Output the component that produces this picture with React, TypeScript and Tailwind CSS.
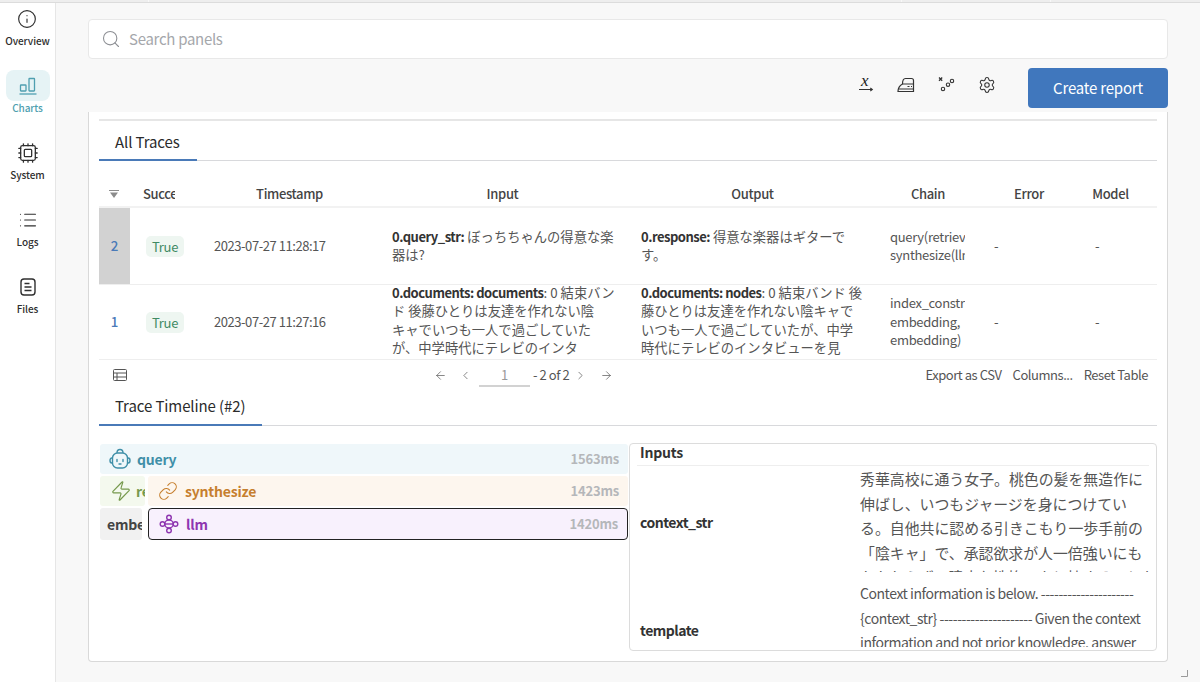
import { ArrowLeft, ArrowRight, ChevronLeft, ChevronRight, Cpu, Info, Link, List, Search, Settings, Zap } from 'lucide-react'

const font = { fontFamily: '"Noto Sans CJK JP", "Noto Sans", sans-serif' }

function ChartsIcon() {
  return (
    <svg width="20" height="20" viewBox="0 0 20 20" fill="none" stroke="currentColor" strokeWidth="1.3">
      <rect x="2.500" y="9" width="5.500" height="6" rx="0.500" />
      <rect x="11" y="2.500" width="5.500" height="12.500" rx="0.500" />
      <path d="M1.500 18h17" />
    </svg>
  )
}

function FilesIcon() {
  return (
    <svg width="18" height="20" viewBox="0 0 18 20" fill="none" stroke="currentColor" strokeWidth="1.400">
      <rect x="2" y="2" width="14" height="16" rx="3" />
      <path d="M5.500 6.500h5M5.500 10h7M5.500 13.500h7" />
    </svg>
  )
}

function VarIcon() {
  return (
    <svg width="16" height="17" viewBox="0 0 16 17" fill="none" className="overflow-visible">
      <text x="3" y="10" fontSize="17" fontStyle="italic" fill="#222" fontFamily='"Liberation Serif", serif'>x</text>
      <path d="M1 13.500h13M12.300 12l2 1.500-2 1.500" stroke="#333" strokeWidth="1.100" />
    </svg>
  )
}

function IronIcon() {
  return (
    <svg width="18" height="16" viewBox="0 0 18 16" fill="none" stroke="#333" strokeWidth="1.200">
      <path d="M1 14.500c0-3.500 1.800-6 4.500-7.500 0-3 1-5.500 3-5.500h6c1.300 0 2 .8 2 2v11z" />
      <path d="M5.500 7h11M1.500 12h15" />
      <path d="M10.500 9.500h2M14 9.500h1" />
    </svg>
  )
}

function ScatterIcon() {
  return (
    <svg width="17" height="17" viewBox="0 0 17 17" fill="none" stroke="#333" strokeWidth="1.100">
      <path d="M1 1.500l3.200 3.200M4.200 1.500L1 4.700" strokeWidth="1.300" />
      <circle cx="5" cy="13" r="1.700" />
      <circle cx="10" cy="8.700" r="1.700" />
      <circle cx="14" cy="5" r="1.700" />
    </svg>
  )
}

function BotIcon() {
  return (
    <svg width="22" height="22" viewBox="0 0 22 22" fill="none" stroke="#3f8fa8" strokeWidth="1.400">
      <rect x="3.500" y="5" width="15" height="15" rx="5" />
      <path d="M8 5c0-2 1.300-3.500 3-3.500S14 3 14 5" />
      <path d="M3.500 10H2.800C1.800 10 1 11 1 12.500S1.800 15 2.800 15h.7M18.500 10h.7c1 0 1.800 1 1.800 2.500S20.200 15 19.200 15h-.7" />
      <path d="M8 11.500v2M14 11.500v2" strokeLinecap="round" />
      <path d="M10 16h2" strokeLinecap="round" />
    </svg>
  )
}

function LlmIcon() {
  return (
    <svg width="20" height="20" viewBox="0 0 20 20" fill="none" stroke="#8e35b0" strokeWidth="1.400">
      <circle cx="10" cy="3.500" r="2.300" />
      <circle cx="10" cy="16.500" r="2.300" />
      <circle cx="3.500" cy="10" r="2.300" />
      <circle cx="16.500" cy="10" r="2.300" />
      <rect x="5.800" y="6" width="8.400" height="8" rx="4" />
      <path d="M5.800 10h8.400" />
    </svg>
  )
}

function TableIcon() {
  return (
    <svg width="14" height="12" viewBox="0 0 14 12" fill="none" stroke="#555" strokeWidth="1">
      <rect x="0.500" y="0.500" width="13" height="11" rx="1" />
      <path d="M.5 4h13M.5 8h13M4 4v7.500" />
    </svg>
  )
}

function NavItem({ label, icon, active }: { label: string; icon: React.ReactNode; active?: boolean }) {
  return (
    <div className={`flex flex-col items-center h-[67px] ${active ? 'text-[#4f9fb0]' : 'text-[#2f2f2f]'}`}>
      <div className={`w-[44px] h-[31px] rounded-[8px] flex items-center justify-center ${active ? 'bg-[#e6f3f5]' : ''}`}>
        {icon}
      </div>
      <div className="text-[10px] tracking-[-0.1px] leading-[14px] font-medium">{label}</div>
    </div>
  )
}

function TrueTag() {
  return <span className="inline-block bg-[#eef6f1] text-[#3f8a63] rounded-[5px] px-[6px] text-[13px] tracking-[-0.3px] leading-[21px]">True</span>
}

function Tab({ label, width, pad }: { label: string; width: string; pad: string }) {
  return (
    <div className="border-b border-[#d8d9dc]">
      <div className={`${width} ${pad} -mb-[1px] border-b-2 border-[#4a7ab8] pl-[16px] text-[15px] tracking-[-0.1px] text-[#2b2b2b]`}>{label}</div>
    </div>
  )
}

const gridCols = 'grid grid-cols-[31px_75px_175px_250px_250px_104px_90px_1fr]'

function Row({ id, selected, time, input, output, chain, height }: {
  id: string
  selected?: boolean
  time: string
  input: React.ReactNode
  output: React.ReactNode
  chain: React.ReactNode
  height: string
}) {
  return (
    <div className={`${gridCols} ${height} border-b border-[#eeeeee] text-[13.300px] leading-[18.500px] text-[#555]`}>
      <div className={`flex items-center justify-center font-medium text-[#4a7ab8] ${selected ? 'bg-[#d2d2d2]' : ''}`}>{id}</div>
      <div className="flex items-center pl-[16px]"><TrueTag /></div>
      <div className="flex items-center pl-[9px] whitespace-nowrap text-[13px] tracking-[-0.45px]">{time}</div>
      <div className="flex items-center pl-[12px] whitespace-nowrap overflow-hidden">{input}</div>
      <div className="flex items-center pl-[11px] whitespace-nowrap overflow-hidden">{output}</div>
      <div className="flex items-center pl-[10px] pr-[19px] whitespace-nowrap text-[13px] tracking-[-0.3px]"><div className="overflow-hidden">{chain}</div></div>
      <div className="flex items-center pl-[10px]">-</div>
      <div className="flex items-center pl-[21px]">-</div>
    </div>
  )
}

export default function App() {
  const boldCell = 'font-bold text-[#333] text-[13px] tracking-[-0.5px]'
  return (
    <div style={font} className="w-[1200px] h-[682px] overflow-hidden bg-[#f8f8f8] flex flex-col">
      <div className="h-[3px] bg-[#eeeeee] border-b border-[#dcdcdc] shrink-0 flex">
        <div className="w-[149px] border-r border-[#f8f8f8]" />
        <div className="w-[753px] border-r border-[#f8f8f8]" />
        <div className="w-[149px] border-r border-[#f8f8f8]" />
      </div>
      <div className="flex flex-1 min-h-0">
        <div className="w-[56px] shrink-0 bg-white border-r border-[#e6e6e6] flex flex-col items-center">
          <NavItem label="Overview" icon={<Info size={20} strokeWidth={1.4} />} />
          <NavItem label="Charts" active icon={<ChartsIcon />} />
          <NavItem label="System" icon={<Cpu size={22} strokeWidth={1.4} />} />
          <NavItem label="Logs" icon={<List size={20} strokeWidth={1.3} />} />
          <NavItem label="Files" icon={<FilesIcon />} />
        </div>

        <div className="flex-1 min-w-0 pl-[32px] pr-[32px] pt-[16px] flex flex-col relative">
          <div className="h-[40px] bg-white border border-[#e8e8e8] rounded-[4px] flex items-center pl-[12px] gap-[8px] text-[15px] tracking-[-0.3px] text-[#a5a7ab] shrink-0">
            <Search size={20} strokeWidth={1.3} className="text-[#8d8f94]" />
            <span className="pt-[1px]">Search panels</span>
          </div>

          <div className="flex items-center justify-end h-[40px] mt-[9px] shrink-0">
            <div className="flex items-center gap-[23px] mr-[32px] -mt-[7px]">
              <VarIcon />
              <IronIcon />
              <ScatterIcon />
              <Settings size={18} strokeWidth={1.4} className="text-[#333]" />
            </div>
            <div className="w-[140px] h-[40px] pt-[1px] rounded-[4px] bg-[#4077bd] text-white text-[15px] tracking-[-0.2px] flex items-center justify-center">Create report</div>
          </div>

          <div className="h-[550px] mt-[4px] bg-white border border-t-0 border-[#d9d9d9] rounded-b-[4px] px-[10px] pt-[7px] shrink-0">
            <div className="border-t-2 border-[#e6e6e6]" />
            <Tab label="All Traces" width="w-[98px]" pad="h-[40px] leading-[42px]" />

            <div className={`${gridCols} h-[47px] border-b-2 border-[#f2f2f2] text-[13px] tracking-[-0.35px] font-medium text-[#444] items-end pb-[3px]`}>
              <div className="flex justify-center pb-[5px] pr-[2px]">
                <svg width="10" height="8" viewBox="0 0 10 8" fill="#8c8c8c">
                  <path d="M0 0h10v1H0zM1 2.500h8L5 8z" />
                </svg>
              </div>
              <div className="pl-[13px] w-[45px] overflow-hidden">Success</div>
              <div className="text-center -ml-[6px]">Timestamp</div>
              <div className="text-center -ml-[5px]">Input</div>
              <div className="text-center -ml-[5px]">Output</div>
              <div className="text-center -ml-[8px]">Chain</div>
              <div className="text-center">Error</div>
              <div className="text-center -mr-[4px] -ml-[14px]">Model</div>
            </div>

            <Row
              id="2"
              selected
              height="h-[77px]"
              time="2023-07-27 11:28:17"
              input={<div><b className={boldCell}>0.query_str:</b> ぼっちちゃんの得意な楽<br />器は?</div>}
              output={<div><b className={boldCell}>0.response:</b> 得意な楽器はギターで<br />す。</div>}
              chain={<>query(retrieve,<br />synthesize(llm</>}
            />
            <Row
              id="1"
              height="h-[75px]"
              time="2023-07-27 11:27:16"
              input={<div className="-mt-[3px]"><b className={boldCell}>0.documents: documents</b>: 0 結束バン<br />ド 後藤ひとりは友達を作れない陰<br />キャでいつも一人で過ごしていた<br />が、中学時代にテレビのインタ</div>}
              output={<div className="-mt-[3px]"><b className={boldCell}>0.documents: nodes</b>: 0 結束バンド 後<br />藤ひとりは友達を作れない陰キャで<br />いつも一人で過ごしていたが、中学<br />時代にテレビのインタビューを見</div>}
              chain={<>index_constru<br />embedding,<br />embedding)</>}
            />

            <div className="h-[26px] pt-[4px] flex items-center text-[13px] tracking-[-0.45px] text-[#555]">
              <div className="w-[335px] shrink-0 pl-[14px]">
                <TableIcon />
              </div>
              <ArrowLeft size={13} strokeWidth={1.3} />
              <ChevronLeft size={13} strokeWidth={1.3} className="ml-[12px]" />
              <div className="w-[51px] ml-[7px] mr-[3px] text-center border-b-2 border-[#d2d2d2] text-[#999] h-[24px] leading-[24px]">1</div>
              <span>- 2 of 2</span>
              <ChevronRight size={13} strokeWidth={1.3} className="ml-[5px]" />
              <ArrowRight size={13} strokeWidth={1.3} className="ml-[13px]" />
              <div className="ml-auto flex gap-[11px] pr-[9px]">
                <span>Export as CSV</span>
                <span>Columns...</span>
                <span>Reset Table</span>
              </div>
            </div>

            <Tab label="Trace Timeline (#2)" width="w-[163px]" pad="h-[40px] leading-[40px]" />

            <div className="flex gap-[1px] mt-[18px]">
              <div className="w-[529px] shrink-0 pl-[1px] flex flex-col gap-[2px] text-[14px] leading-[18px] font-bold tracking-[-0.2px]">
                <div className="h-[30px] rounded-[3px] bg-[#eff7fa] flex items-center pl-[9px] pr-[9px] text-[#3f8fa8]">
                  <BotIcon />
                  <span className="ml-[6px] -mt-[1px]">query</span>
                  <span className="ml-auto text-[#b5b7ba] text-[13px] font-semibold">1563ms</span>
                </div>
                <div className="h-[30px] flex gap-[3px]">
                  <div className="w-[45px] rounded-[3px] bg-[#f4f9ee] flex items-center pl-[10px] text-[#76994d] overflow-hidden">
                    <Zap size={22} strokeWidth={1.3} className="shrink-0" />
                    <span className="ml-[4px]">re</span>
                  </div>
                  <div className="flex-1 rounded-[3px] bg-[#fdf6ee] flex items-center pl-[10px] pr-[9px] text-[#c67f2e]">
                    <Link size={20} strokeWidth={1.3} />
                    <span className="ml-[7px] -mt-[1px]">synthesize</span>
                    <span className="ml-auto text-[#b5b7ba] text-[13px] font-semibold">1423ms</span>
                  </div>
                </div>
                <div className="h-[32px] flex gap-[6px]">
                  <div className="w-[42px] rounded-[3px] bg-[#f1f1f1] flex items-center pl-[7px] text-[#444] overflow-hidden">embe</div>
                  <div className="flex-1 rounded-[4px] bg-[#f8f1fd] border border-[#222] flex items-center pl-[10px] pr-[9px] text-[#8e35b0]">
                    <LlmIcon />
                    <span className="ml-[7px]">llm</span>
                    <span className="ml-auto text-[#b5b7ba] text-[13px] font-semibold">1420ms</span>
                  </div>
                </div>
              </div>

              <div className="w-[528px] h-[208px] -mt-[1px] border border-[#dcdcdc] rounded-[4px] px-[7px] py-[3px]">
                <div className="h-full overflow-hidden">
                  <div className="flex h-[19px] border-b border-[#eeeeee]">
                    <div className="text-[14px] tracking-[-0.2px] leading-[16px] font-bold text-[#333] pl-[3px] -mt-[3px]">Inputs</div>
                  </div>
                  <div className="flex h-[106px] overflow-hidden">
                    <div className="w-[223px] shrink-0 pl-[3px] flex items-center text-[14px] tracking-[-0.5px] font-bold text-[#333] pt-[6px]">context_str</div>
                    <div className="text-[14.900px] leading-[24.500px] text-[#555] whitespace-nowrap pt-[1px]">
                      秀華高校に通う女子。桃色の髪を無造作に<br />
                      伸ばし、いつもジャージを身につけてい<br />
                      る。自他共に認める引きこもり一歩手前の<br />
                      「陰キャ」で、承認欲求が人一倍強いにも<br />
                      かかわらず、臆病な性格で人と接することが
                    </div>
                  </div>
                  <div className="flex h-[75px] overflow-hidden mt-[9px]">
                    <div className="w-[223px] shrink-0 pl-[3px] flex items-center text-[14px] tracking-[-0.5px] font-bold text-[#333] pt-[23px]">template</div>
                    <div className="text-[14px] tracking-[-0.45px] leading-[24.500px] text-[#555] whitespace-nowrap">
                      Context information is below. ---------------------<br />
                      {'{context_str}'} --------------------- Given the context<br />
                      information and not prior knowledge, answer
                    </div>
                  </div>
                </div>
              </div>
            </div>
          </div>

          <svg width="8" height="8" viewBox="0 0 8 8" className="absolute right-[12px] bottom-[5px]" fill="none" stroke="#9a9a9a">
            <path d="M7.500 1v6.500H1" />
          </svg>
        </div>
      </div>
    </div>
  )
}
